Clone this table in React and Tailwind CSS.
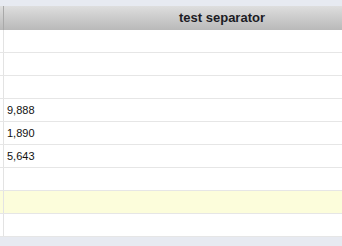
import React from "react";

const rows = ["", "", "", "9,888", "1,890", "5,643", "", "", ""];
const HIGHLIGHT = 7;

export default function App() {
  return (
    <div className="w-[342px] h-[246px] bg-[#e7eaf1] pt-[6px] overflow-hidden font-['Liberation_Sans',Arial,sans-serif]">
      {/* header */}
      <div className="flex h-[24px] bg-gradient-to-b from-[#dedede] to-[#b9b9b9]">
        <div className="w-[4px] border-r border-[#a9a9a9]" />
        <div className="flex-1 flex items-center pl-[175px] text-[13px] font-bold text-[#1c1c24] whitespace-nowrap">
          test separator
        </div>
      </div>

      {/* body rows */}
      <div className="bg-white">
        {rows.map((val, i) => (
          <div
            key={i}
            className={`flex h-[23px] border-b border-[#e6e6e6] ${
              i === HIGHLIGHT ? "bg-[#fcfddb]" : "bg-white"
            }`}
          >
            <div className="w-[4px] border-r border-[#e3e3e3]" />
            <div className="flex-1 flex items-center pl-[3px] text-[11px] text-[#111]">
              {val}
            </div>
          </div>
        ))}
      </div>
    </div>
  );
}
